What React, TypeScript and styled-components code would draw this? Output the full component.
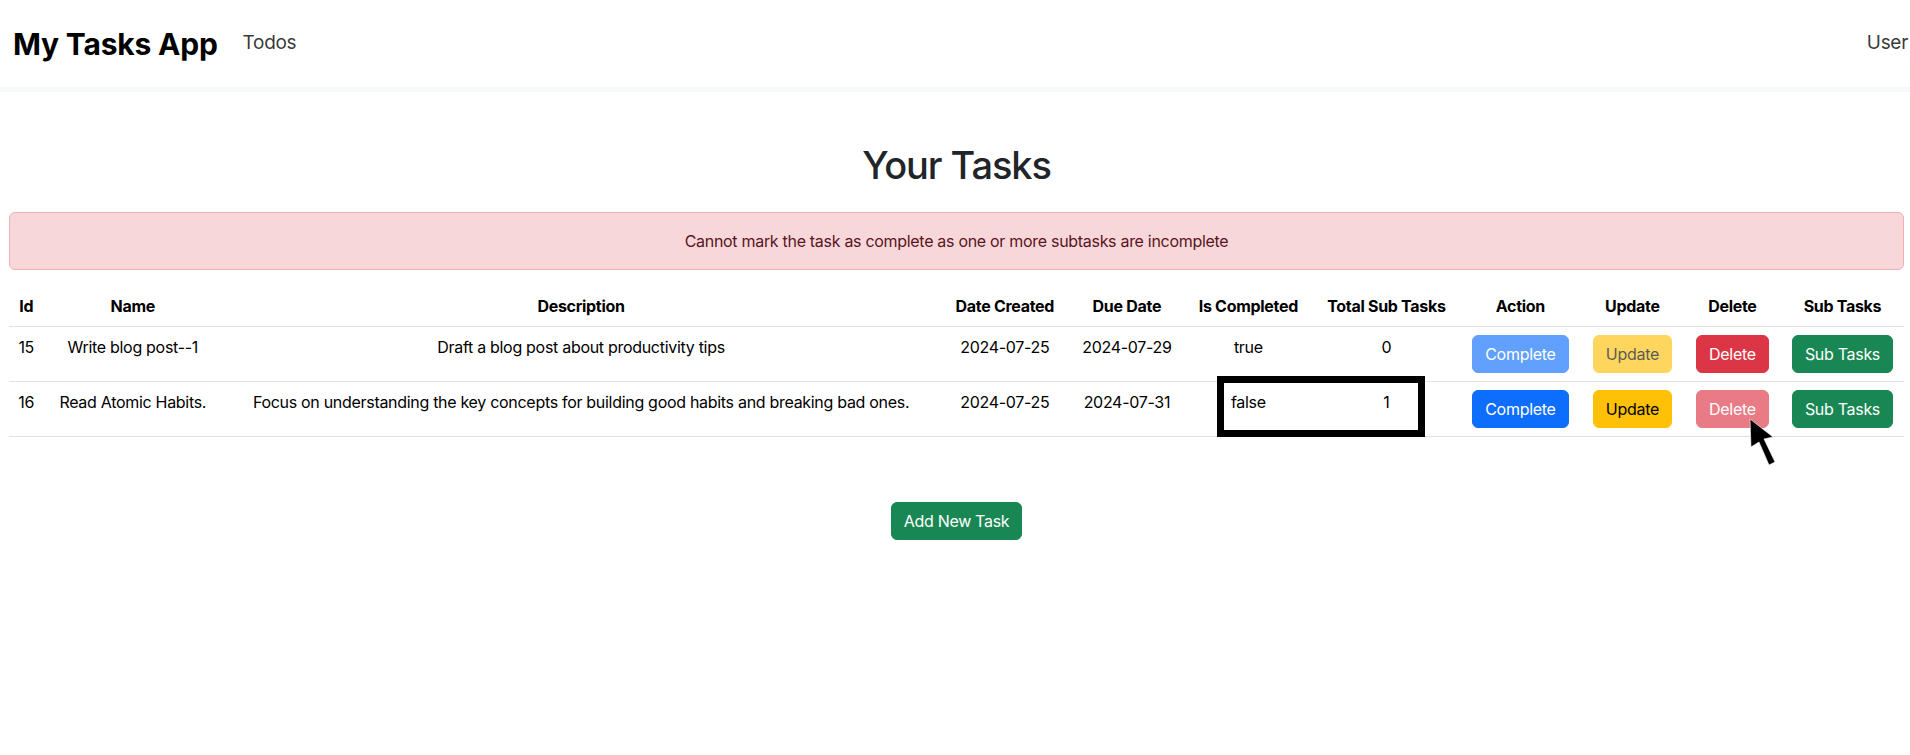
import React from "react";
import styled, { createGlobalStyle } from "styled-components";

const GlobalStyle = createGlobalStyle`
  * { box-sizing: border-box; }
  html, body { margin: 0; padding: 0; background: #fff; }
  body {
    font-family: Inter, "Noto Sans", "Liberation Sans", sans-serif;
    font-size: 16px;
    line-height: 1.5;
    letter-spacing: -0.3px;
    color: #212529;
    overflow-x: hidden;
  }
`;

const Navbar = styled.nav`
  height: 92px;
  display: flex;
  align-items: center;
  padding: 0 2px 0 13px;
  border-bottom: 5px solid #f7f8fa;
`;

const Brand = styled.a`
  font-size: 30px;
  font-weight: 700;
  letter-spacing: -0.2px;
  color: #000;
  text-decoration: none;
  margin-right: 25px;
  line-height: 1.2;
`;

const NavLink = styled.a<{ $push?: boolean }>`
  font-size: 19px;
  color: rgba(0, 0, 0, 0.8);
  text-decoration: none;
  margin-left: ${(p) => (p.$push ? "auto" : "0")};
`;

const Container = styled.main`
  padding: 0 6px 0 9px;
  display: flex;
  flex-direction: column;
  align-items: stretch;
`;

const Title = styled.h1`
  margin: 50px 0 24px;
  text-align: center;
  font-size: 38px;
  font-weight: 500;
  letter-spacing: -1.1px;
  line-height: 46px;
  color: #212529;
`;

const Alert = styled.div`
  background: #f8d7da;
  border: 1px solid #f1aeb5;
  color: #58151c;
  border-radius: 6px;
  padding: 16px;
  margin-bottom: 16px;
  text-align: center;
`;

const TableWrap = styled.div`
  position: relative;
  margin-bottom: 16px;
`;

const Table = styled.table`
  width: 100%;
  border-collapse: collapse;
  table-layout: fixed;
  text-align: center;
  vertical-align: top;
  color: #000;
`;

const Th = styled.th`
  padding: 8px;
  font-weight: 700;
  border-bottom: 1px solid #dee2e6;
  white-space: nowrap;
`;

const Td = styled.td`
  padding: 8px;
  border-bottom: 1px solid #dee2e6;
  vertical-align: top;
  white-space: nowrap;
`;

const variants: Record<string, { bg: string; fg: string }> = {
  primary: { bg: "#0d6efd", fg: "#fff" },
  warning: { bg: "#ffc107", fg: "#000" },
  danger: { bg: "#dc3545", fg: "#fff" },
  success: { bg: "#198754", fg: "#fff" },
};

const Button = styled.button<{ $variant: string; $disabled?: boolean }>`
  font-family: inherit;
  font-size: 16px;
  letter-spacing: inherit;
  line-height: 1.5;
  padding: 6px 12px;
  border: 1px solid ${(p) => variants[p.$variant].bg};
  border-radius: 6px;
  background: ${(p) => variants[p.$variant].bg};
  color: ${(p) => variants[p.$variant].fg};
  opacity: ${(p) => (p.$disabled ? 0.65 : 1)};
  cursor: pointer;
`;

const Footer = styled.div`
  display: flex;
  justify-content: center;
  margin-top: 49px;
`;

const Highlight = styled.div`
  position: absolute;
  left: 1208px;
  top: 90px;
  width: 208px;
  height: 61px;
  border: 7px solid #000;
  pointer-events: none;
`;

const Cursor = styled.svg`
  position: absolute;
  left: 1732px;
  top: 129px;
  width: 36px;
  height: 54px;
  pointer-events: none;
`;

const widths = [34.4, 178.8, 717.6, 130, 114, 129, 147, 121, 103, 97, 123];
const headers = [
  "Id",
  "Name",
  "Description",
  "Date Created",
  "Due Date",
  "Is Completed",
  "Total Sub Tasks",
  "Action",
  "Update",
  "Delete",
  "Sub Tasks",
];

type Task = {
  id: number;
  name: string;
  description: string;
  created: string;
  due: string;
  completed: boolean;
  subtasks: number;
  deleteDisabled: boolean;
};

const tasks: Task[] = [
  {
    id: 15,
    name: "Write blog post--1",
    description: "Draft a blog post about productivity tips",
    created: "2024-07-25",
    due: "2024-07-29",
    completed: true,
    subtasks: 0,
    deleteDisabled: false,
  },
  {
    id: 16,
    name: "Read Atomic Habits.",
    description:
      "Focus on understanding the key concepts for building good habits and breaking bad ones.",
    created: "2024-07-25",
    due: "2024-07-31",
    completed: false,
    subtasks: 1,
    deleteDisabled: true,
  },
];

export default function App() {
  return (
    <>
      <GlobalStyle />
      <Navbar>
        <Brand href="#">My Tasks App</Brand>
        <NavLink href="#">Todos</NavLink>
        <NavLink href="#" $push>
          User
        </NavLink>
      </Navbar>
      <Container>
        <Title>Your Tasks</Title>
        <Alert>
          Cannot mark the task as complete as one or more subtasks are incomplete
        </Alert>
        <TableWrap>
          <Table>
            <colgroup>
              {widths.map((w, i) => (
                <col key={i} style={{ width: `${w}px` }} />
              ))}
            </colgroup>
            <thead>
              <tr>
                {headers.map((h) => (
                  <Th key={h}>{h}</Th>
                ))}
              </tr>
            </thead>
            <tbody>
              {tasks.map((t) => (
                <tr key={t.id}>
                  <Td>{t.id}</Td>
                  <Td>{t.name}</Td>
                  <Td>{t.description}</Td>
                  <Td>{t.created}</Td>
                  <Td>{t.due}</Td>
                  <Td>{String(t.completed)}</Td>
                  <Td>{t.subtasks}</Td>
                  <Td>
                    <Button $variant="primary" $disabled={t.completed}>
                      Complete
                    </Button>
                  </Td>
                  <Td>
                    <Button $variant="warning" $disabled={t.completed}>
                      Update
                    </Button>
                  </Td>
                  <Td>
                    <Button $variant="danger" $disabled={t.deleteDisabled}>
                      Delete
                    </Button>
                  </Td>
                  <Td>
                    <Button $variant="success">Sub Tasks</Button>
                  </Td>
                </tr>
              ))}
            </tbody>
          </Table>
          <Highlight />
          <Cursor viewBox="0 0 36 54">
            <polygon
              points="9,4 32,22 23,24 34,47 28,50 18,27 10,32"
              fill="#000"
              stroke="#fff"
              strokeWidth="0.6"
            />
          </Cursor>
        </TableWrap>
        <Footer>
          <Button $variant="success">Add New Task</Button>
        </Footer>
      </Container>
    </>
  );
}
